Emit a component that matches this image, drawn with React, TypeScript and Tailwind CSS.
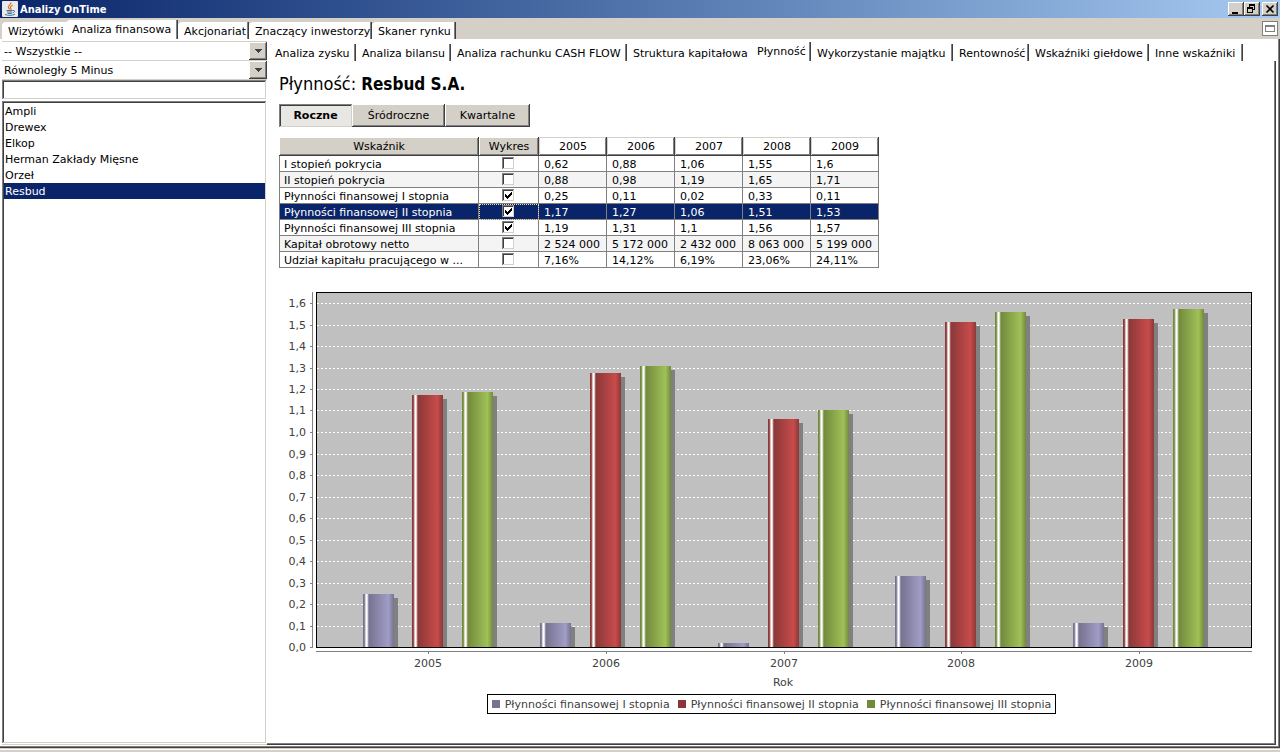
import { useState } from 'react';
import clsx from 'clsx';

const MAIN_TABS = [
  { label: 'Wizytówki', width: 'w-16' },
  { label: 'Analiza finansowa', width: 'w-[112px]' },
  { label: 'Akcjonariat', width: 'w-[71px]' },
  { label: 'Znaczący inwestorzy', width: 'w-[123px]' },
  { label: 'Skaner rynku', width: 'w-[84px]' },
];

const SUB_TABS = [
  { label: 'Analiza zysku', width: 'w-[87px]' },
  { label: 'Analiza bilansu', width: 'w-[95px]' },
  { label: 'Analiza rachunku CASH FLOW', width: 'w-[176px]' },
  { label: 'Struktura kapitałowa', width: 'w-[124px]' },
  { label: 'Płynność', width: 'w-[60px]' },
  { label: 'Wykorzystanie majątku', width: 'w-[142px]' },
  { label: 'Rentowność', width: 'w-[76px]' },
  { label: 'Wskaźniki giełdowe', width: 'w-[120px]' },
  { label: 'Inne wskaźniki', width: 'w-[94px]' },
];

const COMPANIES = ['Ampli', 'Drewex', 'Elkop', 'Herman Zakłady Mięsne', 'Orzeł', 'Resbud'];

const PERIODS = [
  { label: 'Roczne', width: 'w-[73px]' },
  { label: 'Śródroczne', width: 'w-[93px]' },
  { label: 'Kwartalne', width: 'w-[85px]' },
];

const YEARS = ['2005', '2006', '2007', '2008', '2009'];

const ROWS = [
  { name: 'I stopień pokrycia', values: ['0,62', '0,88', '1,06', '1,55', '1,6'] },
  { name: 'II stopień pokrycia', values: ['0,88', '0,98', '1,19', '1,65', '1,71'] },
  { name: 'Płynności finansowej I stopnia', values: ['0,25', '0,11', '0,02', '0,33', '0,11'] },
  { name: 'Płynności finansowej II stopnia', values: ['1,17', '1,27', '1,06', '1,51', '1,53'] },
  { name: 'Płynności finansowej III stopnia', values: ['1,19', '1,31', '1,1', '1,56', '1,57'] },
  { name: 'Kapitał obrotowy netto', values: ['2 524 000', '5 172 000', '2 432 000', '8 063 000', '5 199 000'] },
  { name: 'Udział kapitału pracującego w ...', values: ['7,16%', '14,12%', '6,19%', '23,06%', '24,11%'] },
];

const SERIES = [
  { id: 's1', name: 'Płynności finansowej I stopnia', dark: '#76728f', light: '#a09dc6', swatch: 'bg-[#76728f]', data: [0.248, 0.11, 0.02, 0.328, 0.11] },
  { id: 's2', name: 'Płynności finansowej II stopnia', dark: '#8b3838', light: '#c84b4b', swatch: 'bg-[#8b3538]', data: [1.17, 1.275, 1.06, 1.51, 1.525] },
  { id: 's3', name: 'Płynności finansowej III stopnia', dark: '#728a3c', light: '#a0c158', swatch: 'bg-[#728a3c]', data: [1.185, 1.308, 1.1, 1.56, 1.57] },
];

const RAISED = 'bg-[#d4d0c8] shadow-[inset_-1px_-1px_0_#404040,inset_1px_1px_0_#ffffff,inset_-2px_-2px_0_#808080]';
const SUNKEN = 'shadow-[inset_1px_1px_0_#808080,inset_-1px_-1px_0_#d4d0c8,inset_2px_2px_0_#404040]';

function JavaIcon() {
  return (
    <svg width="16" height="16" viewBox="0 0 16 16" aria-hidden="true">
      <rect width="16" height="16" rx="1" fill="#e9eaec" />
      <path d="M8.8 1.5c1 1.800-3.600 3-2.300 5.200.4.7 1 1.100 1.100 1.800M10.800 4.200c-1.800.8-2.900 1.600-2.300 2.700.3.600.9 1 .3 1.900" fill="none" stroke="#e5701c" strokeWidth="1.200" />
      <path d="M4.500 9.500h6.300M5 11h5.300M5.500 12.500h4.300M11 9.500c2.200-.4 2.200 1.800-.3 2.400" fill="none" stroke="#4a7396" strokeWidth="1" />
      <path d="M3 13.500c2.500 1.200 7.500 1.200 10-.3" fill="none" stroke="#4a7396" strokeWidth="1" />
    </svg>
  );
}

function TitleBar() {
  return (
    <header className="flex h-[18px] items-center bg-linear-to-r from-[#0a246a] to-[#a6caf0] pr-[2px] pl-[2px]">
      <JavaIcon />
      <h1 className="ml-[2px] flex-1 font-['DejaVu_Sans_Condensed','DejaVu_Sans',sans-serif] text-[11px] font-bold text-white">
        Analizy OnTime
      </h1>
      <button aria-label="Minimalizuj" className={clsx('h-[14px] w-4', RAISED)}>
        <svg width="16" height="14" shapeRendering="crispEdges"><path d="M4 10h6v2H4z" /></svg>
      </button>
      <button aria-label="Przywróć" className={clsx('h-[14px] w-4', RAISED)}>
        <svg width="16" height="14" shapeRendering="crispEdges">
          <path d="M5 2h6v2H5zM5 4h1v1H5zM10 4h1v4h-1zM9 7h1v1H9zM3 5h6v2H3zM3 7h1v4H3zM8 7h1v4H8zM3 10h6v1H3z" />
        </svg>
      </button>
      <button aria-label="Zamknij" className={clsx('ml-[2px] h-[14px] w-4', RAISED)}>
        <svg width="16" height="14"><path d="M4.500 3.500l7 7M11.500 3.500l-7 7" stroke="#000" strokeWidth="1.700" /></svg>
      </button>
    </header>
  );
}

type TabsProps = {
  tabs: { label: string; width: string }[];
  active: string;
  onSelect: (label: string) => void;
};

function Tabs({ tabs, active, onSelect }: TabsProps) {
  return (
    <div role="tablist" className="flex items-end">
      {tabs.map((tab, i) => {
        const selected = tab.label === active;
        const beforeActive = tabs[i + 1]?.label === active;
        return (
          <button key={tab.label} role="tab" aria-selected={selected} onClick={() => onSelect(tab.label)}
            className={clsx(
              'flex shrink-0 items-start rounded-tl-sm bg-white pt-[2px] pl-[6px] text-left whitespace-nowrap',
              tab.width,
              selected ? 'h-[19px]' : 'h-[17px]',
              !beforeActive && 'shadow-[inset_-1px_0_0_#404040,inset_-2px_0_0_#808080]',
            )}>
            {tab.label}
          </button>
        );
      })}
    </div>
  );
}

function Combo({ label, options }: { label: string; options: string[] }) {
  return (
    <div className="relative h-[19px] border-t border-[#d4d0c8]">
      <select aria-label={label} className="h-[18px] w-full appearance-none bg-white pr-5 pl-[2px] outline-none">
        {options.map((o) => <option key={o}>{o}</option>)}
      </select>
      <span className={clsx('pointer-events-none absolute top-0 right-0 flex h-[18px] w-[18px] items-center justify-center', RAISED)}>
        <svg width="7" height="4" shapeRendering="crispEdges"><path d="M0 0h7v1H6v1H5v1H4v1H3V3H2V2H1V1H0z" fill="#404040" /></svg>
      </span>
    </div>
  );
}

function Sidebar() {
  const [company, setCompany] = useState('Resbud');
  return (
    <aside className="flex w-[267px] shrink-0 flex-col pt-[2px] pb-px pl-[2px]">
      <Combo label="Rynek" options={['-- Wszystkie --']} />
      <Combo label="Notowania" options={['Równoległy 5 Minus']} />
      <div className="border-t border-[#d4d0c8] pr-px">
        <input type="text" aria-label="Szukaj spółki" className={clsx('block h-[19px] w-full px-1 outline-none', SUNKEN)} />
      </div>
      <div className="mt-[2px] flex flex-1 flex-col border-b border-[#d4d0c8] pr-px pb-px">
        <ul role="listbox" aria-label="Spółki" className={clsx('flex-1 py-[2px] pr-px pl-[2px]', SUNKEN)}>
          {COMPANIES.map((c) => (
            <li key={c} role="option" aria-selected={c === company} onClick={() => setCompany(c)}
              className={clsx('h-4 pl-px leading-[18px]', c === company && 'bg-[#0a246a] text-white')}>
              {c}
            </li>
          ))}
        </ul>
      </div>
    </aside>
  );
}

function IndicatorTable() {
  const [checked, setChecked] = useState([2, 3, 4]);
  const [selectedRow, setSelectedRow] = useState(3);

  const toggle = (i: number) => {
    setChecked((prev) => (prev.includes(i) ? prev.filter((n) => n !== i) : [...prev, i]));
  };

  return (
    <table className="mt-[10px] w-[600px] table-fixed border-separate border-spacing-0">
      <colgroup>
        <col className="w-[200px]" />
        <col className="w-[60px]" />
        {YEARS.map((y) => <col key={y} className="w-[68px]" />)}
      </colgroup>
      <thead>
        <tr className="h-[19px]">
          <th className={clsx('p-0 font-normal', RAISED)}>Wskaźnik</th>
          <th className={clsx('p-0 font-normal', RAISED)}>Wykres</th>
          {YEARS.map((y) => (
            <th key={y} className="p-0 font-normal shadow-[inset_-1px_-1px_0_#404040,inset_1px_1px_0_#d4d0c8,inset_-2px_-2px_0_#808080]">{y}</th>
          ))}
        </tr>
      </thead>
      <tbody>
        {ROWS.map((row, i) => {
          const selected = i === selectedRow;
          return (
            <tr key={row.name} onClick={() => setSelectedRow(i)}
              className={clsx('h-4', selected ? 'bg-[#0a246a] text-white' : i % 2 ? 'bg-[#f4f4f4]' : 'bg-white')}>
              <td className="border-r border-b border-l border-[#808080] pt-[2px] pr-0 pb-0 pl-1 leading-[13px] whitespace-nowrap">{row.name}</td>
              <td className={clsx('border-r border-b border-[#808080] p-0 pt-px align-top', selected && 'outline-1 -outline-offset-1 outline-dotted outline-[#f5db95]')}>
                <label className="relative ml-[23px] block h-3 w-3">
                  <input type="checkbox" aria-label={`Wykres: ${row.name}`} checked={checked.includes(i)} onChange={() => toggle(i)}
                    className={clsx('peer block h-3 w-3 appearance-none bg-white', SUNKEN)} />
                  <svg width="12" height="12" shapeRendering="crispEdges" className="pointer-events-none absolute top-0 left-0 hidden peer-checked:block">
                    <path d="M3 5h1v1h1v1h1V6h1V5h1V4h1V3h1v3H9v1H8v1H7v1H6v1H5V9H4V8H3z" fill="#000" />
                  </svg>
                </label>
              </td>
              {row.values.map((v, n) => (
                <td key={n} className="border-r border-b border-[#808080] pt-[2px] pr-0 pb-0 pl-[5px] leading-[13px] whitespace-nowrap">{v}</td>
              ))}
            </tr>
          );
        })}
      </tbody>
    </table>
  );
}

// Chart geometry in viewBox units
const PLOT = { left: 37, right: 972, top: 8, bottom: 363 };
const UNIT = 215;
const GROUP = 177.6;
const BAR = 31;

function Chart() {
  const ticks = Array.from({ length: 17 }, (_, i) => i);
  return (
    <svg viewBox="0 0 985 404" className="mt-4 block w-full font-['DejaVu_Sans',sans-serif] text-[11px]" role="img" aria-label="Płynność według lat">
      <defs>
        {SERIES.map((s) => (
          <linearGradient key={s.id} id={s.id}>
            <stop offset="0" stopColor={s.dark} />
            <stop offset="0.04" stopColor={s.dark} />
            <stop offset="0.1" stopColor="#fff" />
            <stop offset="0.13" stopColor="#fff" />
            <stop offset="0.19" stopColor={s.dark} />
            <stop offset="0.82" stopColor={s.light} />
            <stop offset="1" stopColor={s.dark} />
          </linearGradient>
        ))}
      </defs>
      <g shapeRendering="crispEdges">
        <rect x={PLOT.left + 0.5} y={PLOT.top + 0.5} width={PLOT.right - PLOT.left} height={PLOT.bottom - PLOT.top} fill="#c0c0c0" stroke="#000" />
        {ticks.slice(1).map((t) => {
          const y = Math.round(PLOT.bottom - (t / 10) * UNIT) + 0.5;
          return <line key={t} x1={PLOT.left + 1} x2={PLOT.right} y1={y} y2={y} stroke="#fff" strokeDasharray="2 2" />;
        })}
        <path d="M33.500 8V363M37 367.500H973" stroke="#808080" fill="none" />
        {YEARS.map((year, g) => SERIES.map((s, n) => {
          const x = Math.floor(84.1 + g * GROUP + n * 49.85);
          const h = Math.round(s.data[g] * UNIT);
          return (
            <g key={year + s.id}>
              {h > 4 && <rect x={x + 4} y={PLOT.bottom - h + 4} width={BAR} height={h - 4} fill="#808080" />}
              <rect x={x} y={PLOT.bottom - h} width={BAR} height={h} fill={`url(#${s.id})`} />
            </g>
          );
        }))}
        {ticks.map((t) => {
          const y = Math.round(PLOT.bottom - (t / 10) * UNIT) + 0.5;
          return <line key={t} x1="31" x2="34" y1={y} y2={y} stroke="#808080" />;
        })}
        {YEARS.map((year, g) => {
          const x = Math.round(149.4 + g * GROUP) + 0.5;
          return <line key={year} x1={x} x2={x} y1="367" y2="370" stroke="#808080" />;
        })}
      </g>
      <g fill="#404040">
        {ticks.map((t) => (
          <text key={t} x="27" y={Math.round(PLOT.bottom - (t / 10) * UNIT) + 4} textAnchor="end">
            {(t / 10).toFixed(1).replace('.', ',')}
          </text>
        ))}
        {YEARS.map((year, g) => (
          <text key={year} x={Math.round(149.4 + g * GROUP)} y="383" textAnchor="middle">{year}</text>
        ))}
        <text x="504" y="402" textAnchor="middle">Rok</text>
      </g>
    </svg>
  );
}

function Legend() {
  return (
    <ul className="mx-auto mt-[6px] flex h-5 w-fit items-center gap-2 border border-black px-1 text-[#404040]">
      {SERIES.map((s) => (
        <li key={s.id} className="flex items-center gap-[5px] whitespace-nowrap">
          <span className={clsx('h-2 w-2', s.swatch)} />
          {s.name}
        </li>
      ))}
    </ul>
  );
}

export default function App() {
  const [mainTab, setMainTab] = useState('Analiza finansowa');
  const [subTab, setSubTab] = useState('Płynność');
  const [period, setPeriod] = useState('Roczne');

  return (
    <div className="flex min-h-screen flex-col bg-white font-['DejaVu_Sans',sans-serif] text-[11px] leading-[15px] text-black">
      <TitleBar />
      <div className="flex h-[21px] items-end justify-between bg-[#d4d0c8] pr-[2px] pl-[2px]">
        <Tabs tabs={MAIN_TABS} active={mainTab} onSelect={setMainTab} />
        <button aria-label="Maksymalizuj panel" className="mb-[3px] flex h-[15px] w-4 justify-center border border-[#808080] bg-white pt-[3px]">
          <span className="h-[7px] w-[10px] border border-t-2 border-[#808080]" />
        </button>
      </div>

      <div className="flex flex-1 pr-[2px] pb-[2px] shadow-[inset_-1px_-1px_0_#404040,inset_-2px_-2px_0_#808080]">
        <Sidebar />
        <main className="mr-[2px] mb-px flex min-w-0 flex-1 flex-col pt-[3px]">
          <div className="pl-[2px]">
            <Tabs tabs={SUB_TABS} active={subTab} onSelect={setSubTab} />
          </div>
          <section className="flex-1 px-3 pt-3 shadow-[inset_-1px_-1px_0_#404040,inset_-2px_-2px_0_#808080]">
            <h2 className="flex h-[22px] items-baseline gap-[5px] font-['DejaVu_Sans_Condensed','DejaVu_Sans',sans-serif] leading-[22px]">
              <span className="text-[18px]">Płynność:</span>
              <strong className="text-[17px]">Resbud S.A.</strong>
            </h2>
            <div className="mt-[9px] flex">
              {PERIODS.map((p) => (
                <button key={p.label} aria-pressed={p.label === period} onClick={() => setPeriod(p.label)}
                  className={clsx('h-[23px]', p.width, p.label === period ? ['bg-[#e9e7e3] font-bold', SUNKEN] : RAISED)}>
                  {p.label}
                </button>
              ))}
            </div>
            <IndicatorTable />
            <Chart />
            <Legend />
          </section>
        </main>
      </div>
      <footer className="h-1 border-t border-b-2 border-[#d4d0c8]" />
    </div>
  );
}
